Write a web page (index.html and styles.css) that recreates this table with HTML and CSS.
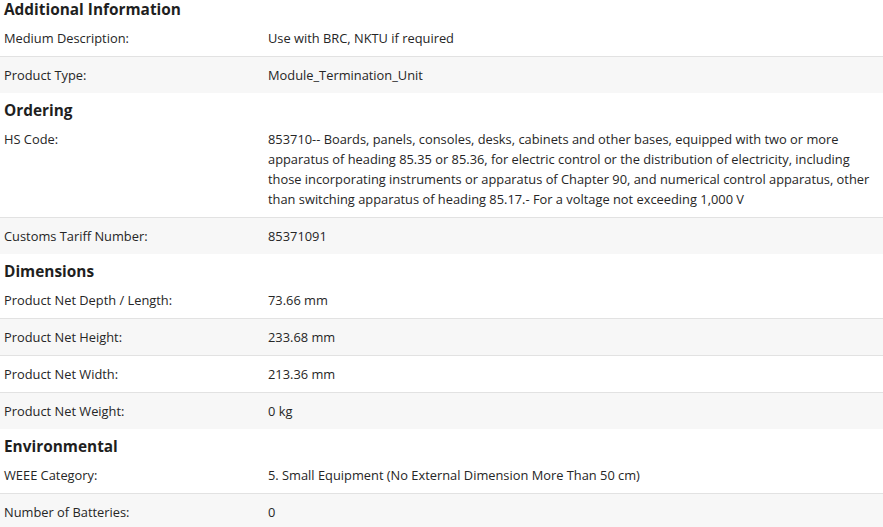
FILE: index.html
```html
<!DOCTYPE html>
<html>
<head>
<meta charset="utf-8">
<link rel="stylesheet" href="styles.css">
</head>
<body>
<div class="specs">
  <section class="group">
    <h2 class="group-title">Additional Information</h2>
    <div class="row"><div class="label">Medium Description:</div><div class="value">Use with BRC, NKTU if required</div></div>
    <div class="row alt"><div class="label">Product Type:</div><div class="value">Module_Termination_Unit</div></div>
  </section>
  <section class="group">
    <h2 class="group-title">Ordering</h2>
    <div class="row"><div class="label">HS Code:</div><div class="value">853710-- Boards, panels, consoles, desks, cabinets and other bases, equipped with two or more apparatus of heading 85.35 or 85.36, for electric control or the distribution of electricity, including those incorporating instruments or apparatus of Chapter 90, and numerical control apparatus, other than switching apparatus of heading 85.17.- For a voltage not exceeding 1,000 V</div></div>
    <div class="row alt"><div class="label">Customs Tariff Number:</div><div class="value">85371091</div></div>
  </section>
  <section class="group">
    <h2 class="group-title">Dimensions</h2>
    <div class="row"><div class="label">Product Net Depth / Length:</div><div class="value">73.66 mm</div></div>
    <div class="row alt"><div class="label">Product Net Height:</div><div class="value">233.68 mm</div></div>
    <div class="row"><div class="label">Product Net Width:</div><div class="value">213.36 mm</div></div>
    <div class="row alt"><div class="label">Product Net Weight:</div><div class="value">0 kg</div></div>
  </section>
  <section class="group">
    <h2 class="group-title">Environmental</h2>
    <div class="row"><div class="label">WEEE Category:</div><div class="value">5. Small Equipment (No External Dimension More Than 50 cm)</div></div>
    <div class="row alt"><div class="label">Number of Batteries:</div><div class="value">0</div></div>
  </section>
</div>
</body>
</html>
```
FILE: styles.css
```css
html, body {
  margin: 0;
  padding: 0;
  background: #ffffff;
}
body {
  font-family: "Open Sans", "Lato", sans-serif;
  font-size: 12.85px;
  color: #262626;
}
.specs {
  width: 883px;
}
.group-title {
  margin: 0;
  padding: 8px 4px 0;
  height: 20px;
  line-height: 20px;
  font-size: 15.4px;
  font-weight: 700;
  color: #1f1f1f;
}
.group:first-child .group-title {
  padding-top: 0;
}
.row {
  display: grid;
  grid-template-columns: 264px 1fr;
  padding: 8px 4px;
  line-height: 20px;
  background: #ffffff;
}
.row + .row {
  border-top: 1px solid #e2e2e2;
}
.row.alt {
  background: #f7f7f7;
}
```
